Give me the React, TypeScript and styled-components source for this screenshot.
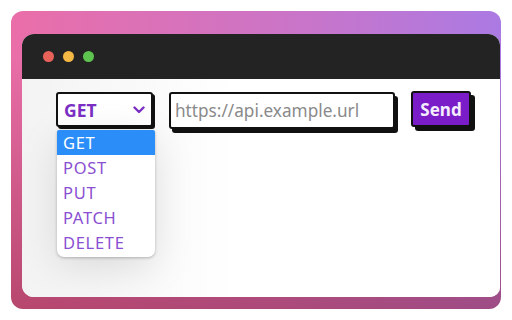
import * as React from "react";
import styled, { createGlobalStyle } from "styled-components";

const METHODS = ["GET", "POST", "PUT", "PATCH", "DELETE"];

const GlobalStyle = createGlobalStyle`
  html, body {
    margin: 0;
    padding: 0;
    background: #ffffff;
  }
  body {
    font-family: "Noto Sans", "Lato", sans-serif;
  }
`;

export default function App() {
  const [method] = React.useState("GET");

  return (
    <>
      <GlobalStyle />
      <Page>
        <Card>
          <Window>
            <TitleBar>
              <Dot color="#e8625a" />
              <Dot color="#f4b844" />
              <Dot color="#5cc44f" />
            </TitleBar>
            <Content>
              <RequestRow>
                <SelectWrap>
                  <SelectBox>
                    <SelectValue>{method}</SelectValue>
                    <svg width="12" height="8" viewBox="0 0 12 8">
                      <path
                        d="M1.5 1.5 L6 6 L10.5 1.5"
                        fill="none"
                        stroke="#7b2fc4"
                        strokeWidth="2.4"
                        strokeLinecap="round"
                        strokeLinejoin="round"
                      />
                    </svg>
                  </SelectBox>
                  <OptionList>
                    {METHODS.map(m => (
                      <Option key={m} active={m === method}>
                        {m}
                      </Option>
                    ))}
                  </OptionList>
                </SelectWrap>
                <UrlInput placeholder="https://api.example.url" />
                <SendButton>Send</SendButton>
              </RequestRow>
            </Content>
          </Window>
        </Card>
      </Page>
    </>
  );
}

const Page = styled.div`
  width: 512px;
  height: 320px;
  padding: 11px;
  box-sizing: border-box;
`;

const Card = styled.div`
  height: 298px;
  border-radius: 12px;
  padding: 23px 1px 12px 11px;
  box-sizing: border-box;
  background:
    linear-gradient(to bottom, rgba(0, 0, 0, 0) 15%, rgba(150, 45, 70, 0.6) 100%),
    linear-gradient(to right, #ea6ea8 0%, #cc74c6 55%, #ab7ae3 100%);
`;

const Window = styled.div`
  height: 100%;
  display: flex;
  flex-direction: column;
  border-radius: 12px 12px 10px 12px;
  overflow: hidden;
  background: #ffffff;
`;

const TitleBar = styled.div`
  height: 45px;
  flex-shrink: 0;
  background: #232323;
  display: flex;
  align-items: center;
  gap: 9px;
  padding-left: 21px;
`;

const Dot = styled.span<{ color: string }>`
  width: 11px;
  height: 11px;
  border-radius: 50%;
  background: ${p => p.color};
`;

const Content = styled.div`
  flex: 1;
  padding: 13px 0 0 34px;
  background: linear-gradient(to right, #f3f3f3 0%, #ffffff 45%);
`;

const RequestRow = styled.div`
  display: flex;
  align-items: flex-start;
`;

const SelectWrap = styled.div`
  position: relative;
  width: 97px;
  margin-right: 16px;
`;

const SelectBox = styled.div`
  height: 35px;
  box-sizing: border-box;
  border: 2px solid #111;
  border-radius: 3px;
  box-shadow: 2px 2px 0 #111;
  background: #fff;
  display: flex;
  align-items: center;
  justify-content: space-between;
  padding: 0 6px 0 6px;
`;

const SelectValue = styled.span`
  color: #7b2fc4;
  font-weight: 700;
  font-size: 17.5px;
`;

const OptionList = styled.div`
  position: absolute;
  top: 38px;
  left: 1px;
  width: 98px;
  padding-bottom: 2px;
  background: #fff;
  border-radius: 2px 2px 7px 7px;
  box-shadow: 0 1px 3px rgba(0, 0, 0, 0.25), 0 10px 40px rgba(0, 0, 0, 0.12);
  overflow: hidden;
`;

const Option = styled.div<{ active?: boolean }>`
  height: 25px;
  line-height: 25px;
  padding-left: 6px;
  font-size: 16.5px;
  letter-spacing: 0.7px;
  color: ${p => (p.active ? "#ffffff" : "#8a4fd2")};
  background: ${p => (p.active ? "#2b8df7" : "transparent")};
`;

const UrlInput = styled.input`
  width: 226px;
  height: 37px;
  box-sizing: border-box;
  border: 2px solid #111;
  border-radius: 3px;
  box-shadow: 3px 4px 0 #111;
  padding: 0 4px;
  font-family: "Noto Sans", "Lato", sans-serif;
  font-size: 17.2px;
  outline: none;
  margin-right: 16px;

  &::placeholder {
    color: #8a8a8a;
  }
`;

const SendButton = styled.button`
  width: 60px;
  height: 36px;
  margin-top: -1px;
  box-sizing: border-box;
  border: 2px solid #111;
  border-radius: 3px;
  box-shadow: 4px 4px 0 #111;
  background: #7a1dc8;
  color: #f4ecff;
  font-family: "Noto Sans", "Lato", sans-serif;
  font-weight: 700;
  font-size: 17px;
  padding: 0;
  cursor: pointer;
`;
